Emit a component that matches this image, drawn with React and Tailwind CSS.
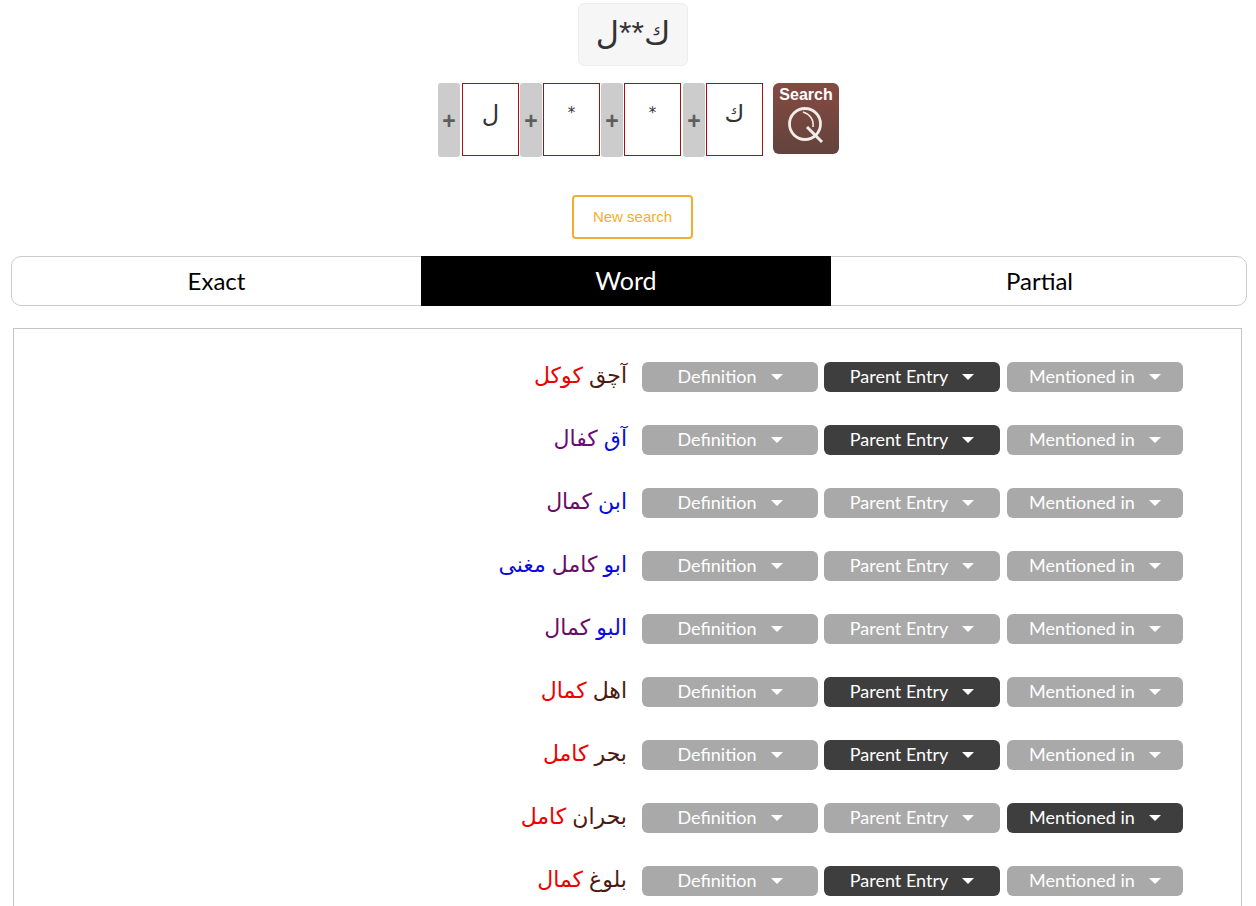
const rows = [
  { a: "آچق", ac: "text-[#4a1a12]", b: "كوكل", bc: "text-[#ee0000]", on: "parent" },
  { a: "آق", ac: "text-[#0a0ae0]", b: "كفال", bc: "text-[#680c78]", on: "parent" },
  { a: "ابن", ac: "text-[#0a0ae0]", b: "كمال", bc: "text-[#680c68]" },
  { a: "ابو", ac: "text-[#0a0ae0]", b: "كامل", bc: "text-[#680c68]", c: "مغنى" },
  { a: "البو", ac: "text-[#0a0ae0]", b: "كمال", bc: "text-[#680c68]" },
  { a: "اهل", ac: "text-[#4a1a12]", b: "كمال", bc: "text-[#ee0000]", on: "parent" },
  { a: "بحر", ac: "text-[#4a1a12]", b: "كامل", bc: "text-[#ee0000]", on: "parent" },
  { a: "بحران", ac: "text-[#4a1a12]", b: "كامل", bc: "text-[#ee0000]", on: "mentioned" },
  { a: "بلوغ", ac: "text-[#4a1a12]", b: "كمال", bc: "text-[#ee0000]", on: "parent" },
];

function DropBtn({ label, active }) {
  return (
    <button
      className={
        "flex h-[30px] w-[176px] items-center justify-center gap-[14px] rounded-md pb-[2px] text-[18px] text-white " +
        (active ? "bg-[#3e3e3e]" : "bg-[#a9a9a9]")
      }
    >
      <span>{label}</span>
      <span className="mt-[2px] h-0 w-0 border-x-[6px] border-t-[6px] border-x-transparent border-t-white" />
    </button>
  );
}

function PlusBtn() {
  return (
    <div className="flex h-[74px] w-[22px] items-center justify-center rounded-[3px] bg-[#cccccc] pt-[2px] font-['Liberation_Sans',sans-serif] text-[23px] font-bold text-[#5e5e5e]">
      +
    </div>
  );
}

function LetterBox({ ch, small }) {
  return (
    <div
      className={
        "flex h-[73px] w-[57px] justify-center border border-[#a80d14] bg-white text-[#333333] " +
        (small ? "pt-[18px] text-[15px]" : "pt-[14px] text-[24px] leading-[32px]")
      }
    >
      {ch}
    </div>
  );
}

export default function App() {
  return (
    <div className="h-[906px] overflow-hidden bg-white font-['Lato',sans-serif]">
      <div className="flex justify-center pt-[3px] pl-[10px]">
        <div
          dir="rtl"
          className="flex h-[63px] w-[110px] items-center justify-center rounded-md border border-[#eeeeee] bg-[#f6f6f6] pb-[3px] font-['Liberation_Sans','DejaVu_Sans',sans-serif] text-[32px] text-[#333333]"
        >
          ك**ل
        </div>
      </div>

      <div className="mt-[17px] ml-[438px] flex items-start font-['DejaVu_Sans',sans-serif]">
        <PlusBtn />
        <div className="ml-[2px]"><LetterBox ch="ل" /></div>
        <div className="ml-px"><PlusBtn /></div>
        <div className="ml-px"><LetterBox ch="*" small /></div>
        <div className="ml-px"><PlusBtn /></div>
        <div className="ml-px"><LetterBox ch="*" small /></div>
        <div className="ml-[2px]"><PlusBtn /></div>
        <div className="ml-px"><LetterBox ch="ك" /></div>
        <div className="ml-[10px] flex h-[71px] w-[66px] flex-col items-center rounded-md bg-gradient-to-b from-[#864a41] to-[#62433d] pt-[2px] font-['Liberation_Sans',sans-serif] text-[16px] font-bold leading-[19px] text-white">
          Search
          <svg className="mt-[2px]" width="38" height="38" viewBox="0 0 38 38" fill="none" stroke="#f4ece8" strokeWidth="2.8">
            <circle cx="18" cy="18" r="15.5" />
            <path d="M20 21 L35 36" strokeWidth="3" />
            <path d="M16 6 C23 8 27 14 26 21" strokeWidth="1.6" />
          </svg>
        </div>
      </div>

      <div className="mt-[38px] flex justify-center pl-[9px]">
        <button className="h-[44px] w-[121px] rounded-[4px] border-2 border-[#f5ac33] bg-white font-['Liberation_Sans',sans-serif] text-[15px] text-[#f5ac33]">
          New search
        </button>
      </div>

      <div className="mt-[17px] ml-[11px] flex h-[50px] w-[1236px] rounded-[10px] border border-[#cccccc] text-[24px] text-black">
        <div className="flex w-[409px] items-center justify-center">Exact</div>
        <div className="-my-px flex w-[410px] items-center justify-center bg-black text-[25px] text-white">Word</div>
        <div className="flex flex-1 items-center justify-center pl-[2px]">Partial</div>
      </div>

      <div className="mt-[22px] ml-[13px] w-[1229px] border border-[#c4c4c4] pt-[33px] pr-[58px]">
        {rows.map((r, i) => (
          <div key={i} className="flex h-[63px] items-start justify-end gap-[6px]">
            <div dir="rtl" className="mr-[9px] h-[30px] whitespace-nowrap font-['DejaVu_Sans',sans-serif] text-[22px] leading-[28px] [word-spacing:-1px]">
              <span className={r.ac}>{r.a}</span>{" "}
              <span className={r.bc}>{r.b}</span>
              {r.c && <span className="text-[#0a0ae0]"> {r.c}</span>}
            </div>
            <DropBtn label="Definition" />
            <DropBtn label="Parent Entry" active={r.on === "parent"} />
            <div className="ml-px">
              <DropBtn label="Mentioned in" active={r.on === "mentioned"} />
            </div>
          </div>
        ))}
      </div>
    </div>
  );
}
